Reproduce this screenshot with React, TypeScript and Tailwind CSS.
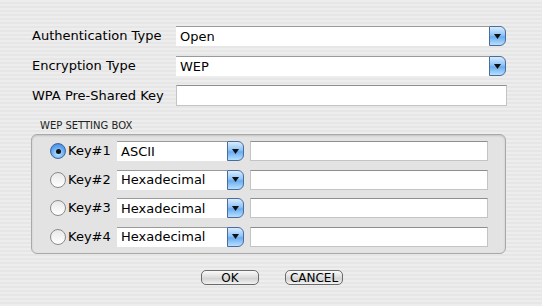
import React from 'react';

const font = { fontFamily: '"Lucida Grande", "DejaVu Sans", sans-serif' };

const Arrow = () => (
  <div className="flex h-full w-[17px] items-center justify-center rounded-r-[6px] border border-[#4a6c9c] bg-[linear-gradient(#d9ecff,#8fc3f7_45%,#6aacf0_55%,#b6e0ff)]">
    <svg width="7" height="5" viewBox="0 0 7 5">
      <path d="M0 0 L7 0 L3.5 5 Z" fill="#111" />
    </svg>
  </div>
);

const Select = ({ value, width }: { value: string; width: string }) => (
  <div className="flex h-full items-stretch">
    <div className={`${width} flex items-center border-t border-[#9a9a9a] bg-white pl-[4px] text-[13px] text-black`}>{value}</div>
    <Arrow />
  </div>
);

const Input = ({ width }: { width: string }) => (
  <div className={`${width} h-full border border-[#c4c4c4] border-t-[#8e8e8e] bg-white`} />
);

const Radio = ({ checked }: { checked?: boolean }) =>
  checked ? (
    <div className="flex h-[16px] w-[16px] items-center justify-center rounded-full border border-[#3c64a0] bg-[radial-gradient(circle_at_50%_70%,#bfe4ff,#5da3ef_60%,#3a7fd8)]">
      <div className="h-[5px] w-[5px] rounded-full bg-[#111]" />
    </div>
  ) : (
    <div className="h-[16px] w-[16px] rounded-full border border-[#8a8a8a] bg-[linear-gradient(#e8e8e8,#ffffff)]" />
  );

const keys = [
  { name: 'Key#1', type: 'ASCII', checked: true },
  { name: 'Key#2', type: 'Hexadecimal' },
  { name: 'Key#3', type: 'Hexadecimal' },
  { name: 'Key#4', type: 'Hexadecimal' },
];

export default function App() {
  return (
    <div
      className="h-[306px] w-[542px] bg-[#ececec] bg-[repeating-linear-gradient(#ededed_0px,#ededed_2px,#e6e6e6_2px,#e6e6e6_4px)] pl-[32px] pt-[26px] text-black"
      style={font}
    >
      {/* top fields */}
      <div className="flex h-[20px] items-center">
        <div className="w-[144px] text-[13px]">Authentication Type</div>
        <Select value="Open" width="w-[313px]" />
      </div>
      <div className="mt-[10px] flex h-[20px] items-center">
        <div className="w-[144px] text-[13px]">Encryption Type</div>
        <Select value="WEP" width="w-[313px]" />
      </div>
      <div className="mt-[9px] flex h-[21px] items-center">
        <div className="w-[144px] text-[13px]">WPA Pre-Shared Key</div>
        <Input width="w-[331px]" />
      </div>

      {/* WEP box */}
      <div className="mt-[14px] pl-[8px] text-[10px] leading-[12px] text-[#222]">WEP SETTING BOX</div>
      <div className="ml-[-1px] mt-[2px] flex h-[120px] w-[475px] flex-col gap-[8.5px] rounded-[6px] border border-[#a9a9a9] bg-[#e3e3e3] pl-[18px] pt-[6px] shadow-[inset_0_1px_2px_rgba(0,0,0,0.15)]">
        {keys.map((k) => (
          <div key={k.name} className="flex h-[20px] items-center">
            <Radio checked={k.checked} />
            <div className="ml-[2px] w-[49px] text-[13px]">{k.name}</div>
            <Select value={k.type} width="w-[110px]" />
            <div className="ml-[6px] h-full">
              <Input width="w-[238px]" />
            </div>
          </div>
        ))}
      </div>

      {/* buttons */}
      <div className="ml-[169px] mt-[16px] flex gap-[26px]">
        <button className="flex h-[15px] w-[58px] items-center justify-center rounded-[5px] border border-[#6b6b6b] bg-[linear-gradient(#fafafa,#dcdcdc_50%,#cfcfcf_51%,#f2f2f2)] text-[12px] leading-none">
          OK
        </button>
        <button className="flex h-[15px] w-[58px] items-center justify-center rounded-[5px] border border-[#6b6b6b] bg-[linear-gradient(#fafafa,#dcdcdc_50%,#cfcfcf_51%,#f2f2f2)] text-[12px] leading-none">
          CANCEL
        </button>
      </div>
    </div>
  );
}
